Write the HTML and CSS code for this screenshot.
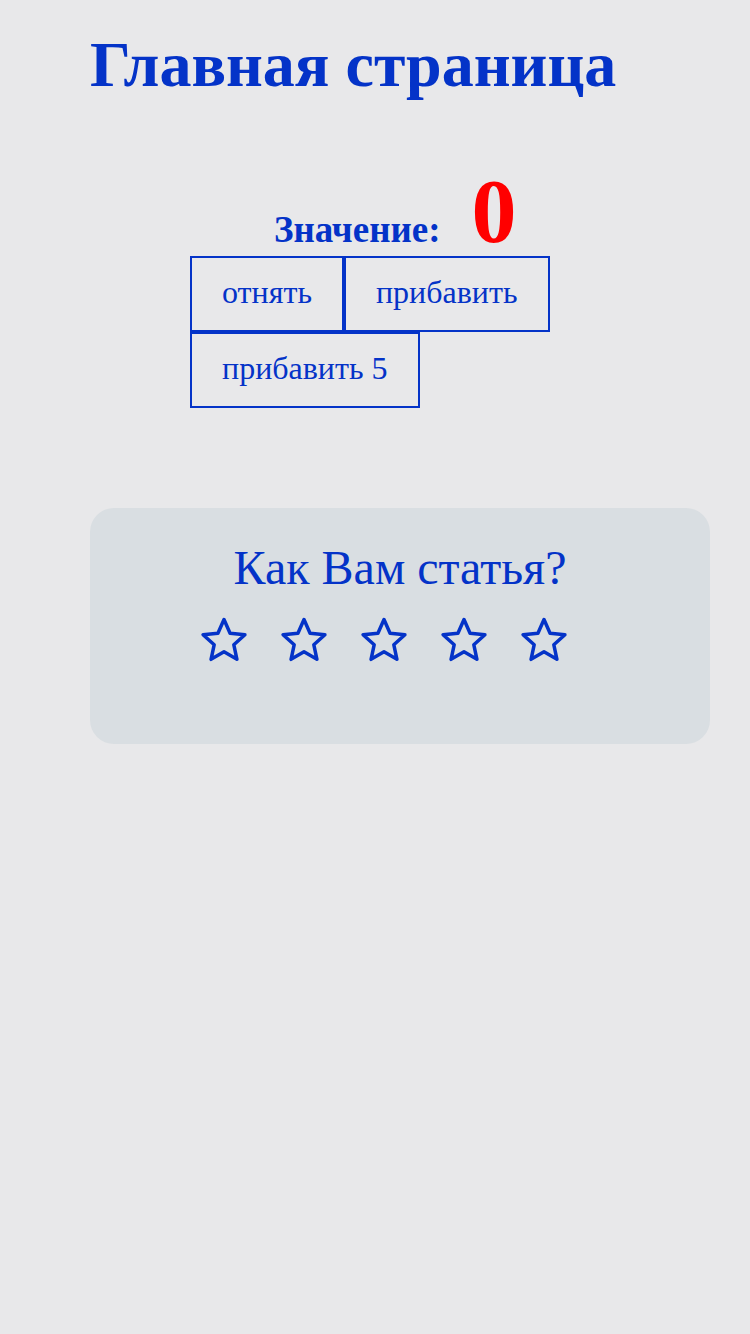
FILE: index.html
```html
<!DOCTYPE html>
<html lang="ru">
<head>
<meta charset="utf-8">
<title>Главная страница</title>
<link rel="stylesheet" href="styles.css">
</head>
<body>
<div class="page">
  <h1 class="title">Главная страница</h1>
  <section class="counter">
    <div class="value-row">
      <span class="value-label">Значение:</span>
      <span class="value-number">0</span>
    </div>
    <div class="buttons">
      <button class="btn">отнять</button>
      <button class="btn">прибавить</button>
      <button class="btn">прибавить 5</button>
    </div>
  </section>
  <section class="rating">
    <h2 class="rating-title">Как Вам статья?</h2>
    <div class="stars">
      <svg class="star" viewBox="0 0 48 48" width="48" height="48"><polygon points="24,3.5 30.05,17.17 44.92,18.7 33.8,28.68 36.93,43.3 24,35.8 11.07,43.3 14.2,28.68 3.08,18.7 17.95,17.17"/></svg>
      <svg class="star" viewBox="0 0 48 48" width="48" height="48"><polygon points="24,3.5 30.05,17.17 44.92,18.7 33.8,28.68 36.93,43.3 24,35.8 11.07,43.3 14.2,28.68 3.08,18.7 17.95,17.17"/></svg>
      <svg class="star" viewBox="0 0 48 48" width="48" height="48"><polygon points="24,3.5 30.05,17.17 44.92,18.7 33.8,28.68 36.93,43.3 24,35.8 11.07,43.3 14.2,28.68 3.08,18.7 17.95,17.17"/></svg>
      <svg class="star" viewBox="0 0 48 48" width="48" height="48"><polygon points="24,3.5 30.05,17.17 44.92,18.7 33.8,28.68 36.93,43.3 24,35.8 11.07,43.3 14.2,28.68 3.08,18.7 17.95,17.17"/></svg>
      <svg class="star" viewBox="0 0 48 48" width="48" height="48"><polygon points="24,3.5 30.05,17.17 44.92,18.7 33.8,28.68 36.93,43.3 24,35.8 11.07,43.3 14.2,28.68 3.08,18.7 17.95,17.17"/></svg>
    </div>
  </section>
</div>
</body>
</html>
```

FILE: styles.css
```css
html, body {
  margin: 0;
  padding: 0;
  background: #e8e8ea;
  height: 100%;
}

body {
  font-family: "Liberation Serif", "Times New Roman", serif;
  color: #0433c8;
}

.page {
  padding: 0 40px 40px 90px;
}

.title {
  margin: 0;
  padding-top: 28px;
  font-size: 64px;
  font-weight: bold;
  line-height: 74px;
}

.counter {
  margin-top: 70px;
  padding-left: 100px;
}

.value-row {
  display: flex;
  align-items: baseline;
  padding-left: 84px;
  margin-bottom: 4px;
}

.value-label {
  font-size: 37px;
  font-weight: bold;
}

.value-number {
  margin-left: 31px;
  font-size: 90px;
  font-weight: bold;
  color: #ff0000;
  line-height: 80px;
}

.buttons {
  display: flex;
  flex-wrap: wrap;
  width: 360px;
}

.btn {
  font-family: "Liberation Serif", "Times New Roman", serif;
  font-size: 32px;
  color: #0433c8;
  background: transparent;
  border: 2px solid #0433c8;
  padding: 17px 30px 21px;
  margin: 0;
  line-height: 34px;
}

.rating {
  margin-top: 100px;
  width: 620px;
  height: 236px;
  box-sizing: border-box;
  background: #d9dee2;
  border-radius: 24px;
  padding-top: 31px;
  text-align: center;
}

.rating-title {
  margin: 0;
  font-size: 48px;
  font-weight: normal;
  line-height: 58px;
}

.stars {
  display: flex;
  justify-content: center;
  margin-top: 19px;
}

.star {
  display: block;
  margin-right: 32px;
  fill: none;
  stroke: #0433c8;
  stroke-width: 3.5;
  stroke-linejoin: round;
}
```
